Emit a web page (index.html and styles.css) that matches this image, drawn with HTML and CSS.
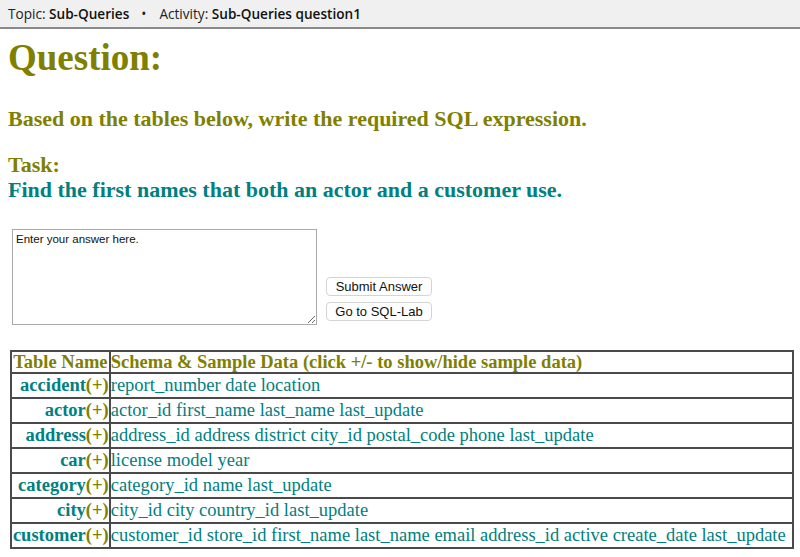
FILE: index.html
```html
<!DOCTYPE html>
<html>
<head>
<meta charset="utf-8">
<link rel="stylesheet" href="styles.css">
</head>
<body>
<div class="topbar">Topic: <b>Sub-Queries</b><span class="dot">•</span>Activity: <b>Sub-Queries question1</b></div>
<div class="content">
  <h1 class="q">Question:</h1>
  <h3 class="based">Based on the tables below, write the required SQL expression.</h3>
  <h3 class="task">Task:</h3>
  <h3 class="find">Find the first names that both an actor and a customer use.</h3>
  <div class="answer">
    <textarea class="ta">Enter your answer here.</textarea>
    <div class="btns">
      <button class="btn">Submit Answer</button>
      <button class="btn">Go to SQL-Lab</button>
    </div>
  </div>
  <table class="schema">
    <tr class="head"><th>Table Name</th><th class="left">Schema &amp; Sample Data (click +/- to show/hide sample data)</th></tr>
    <tr><td class="name">accident<span class="pm">(+)</span></td><td>report_number date location</td></tr>
    <tr><td class="name">actor<span class="pm">(+)</span></td><td>actor_id first_name last_name last_update</td></tr>
    <tr><td class="name">address<span class="pm">(+)</span></td><td>address_id address district city_id postal_code phone last_update</td></tr>
    <tr><td class="name">car<span class="pm">(+)</span></td><td>license model year</td></tr>
    <tr><td class="name">category<span class="pm">(+)</span></td><td>category_id name last_update</td></tr>
    <tr><td class="name">city<span class="pm">(+)</span></td><td>city_id city country_id last_update</td></tr>
    <tr><td class="name">customer<span class="pm">(+)</span></td><td>customer_id store_id first_name last_name email address_id active create_date last_update</td></tr>
  </table>
</div>
</body>
</html>
```
FILE: styles.css
```css
html, body { margin: 0; padding: 0; background: #fff; }
body { font-family: "Liberation Serif", "Times New Roman", serif; }
.topbar {
  height: 27px;
  background: #f0f0f0;
  border-bottom: 2px solid #8a8a8a;
  font-family: "Open Sans", sans-serif;
  font-size: 13.6px;
  line-height: 27px;
  color: #222;
  padding-left: 8px;
}
.topbar b { font-weight: 600; color: #111; }
.topbar .dot { margin: 0 13px 0 12px; }
.content { padding: 0 8px; }
h1.q {
  margin: 8px 0 0 0;
  font-size: 37px;
  line-height: 42px;
  color: #808000;
  font-weight: bold;
}
h3 { margin: 0; font-weight: bold; font-size: 22px; line-height: 25px; }
.based { color: #808000; margin-top: 27px; }
.task { color: #808000; margin-top: 21px; }
.find { color: #008080; margin-top: 0; }
.answer {
  display: flex;
  align-items: flex-end;
  margin-top: 27px;
  margin-left: 4px;
}
.ta {
  width: 305px;
  height: 96px;
  box-sizing: border-box;
  border: 1px solid #a9a9a9;
  font-family: "Liberation Sans", Arial, sans-serif;
  font-size: 11.5px;
  padding: 3px 3px;
  margin: 0;
  resize: both;
  color: #111;
}
.btns {
  display: flex;
  flex-direction: column;
  gap: 6px;
  margin-left: 9px;
  margin-bottom: 4px;
}
.btn {
  width: 106px;
  height: 19px;
  box-sizing: border-box;
  background: #fff;
  border: 1px solid #d4d4d4;
  border-radius: 4px;
  font-family: "Liberation Sans", Arial, sans-serif;
  font-size: 13px;
  padding: 0;
  color: #111;
  line-height: 17px;
}
.schema {
  margin-top: 25px;
  margin-left: 2px;
  width: 784px;
  border-collapse: collapse;
  font-size: 18.5px;
}
.schema th, .schema td {
  border: 2px solid #4a4a4a;
  padding: 0;
  height: 23px;
  line-height: 21px;
  white-space: nowrap;
}
.schema tr.head th { height: 20px; line-height: 20px; }
.schema th { color: #808000; font-weight: bold; text-align: center; }
.schema th.left { text-align: left; }
.schema td { color: #008080; text-align: left; }
.schema td.name { font-weight: bold; text-align: right; }
.schema .pm { color: #808000; }
```
